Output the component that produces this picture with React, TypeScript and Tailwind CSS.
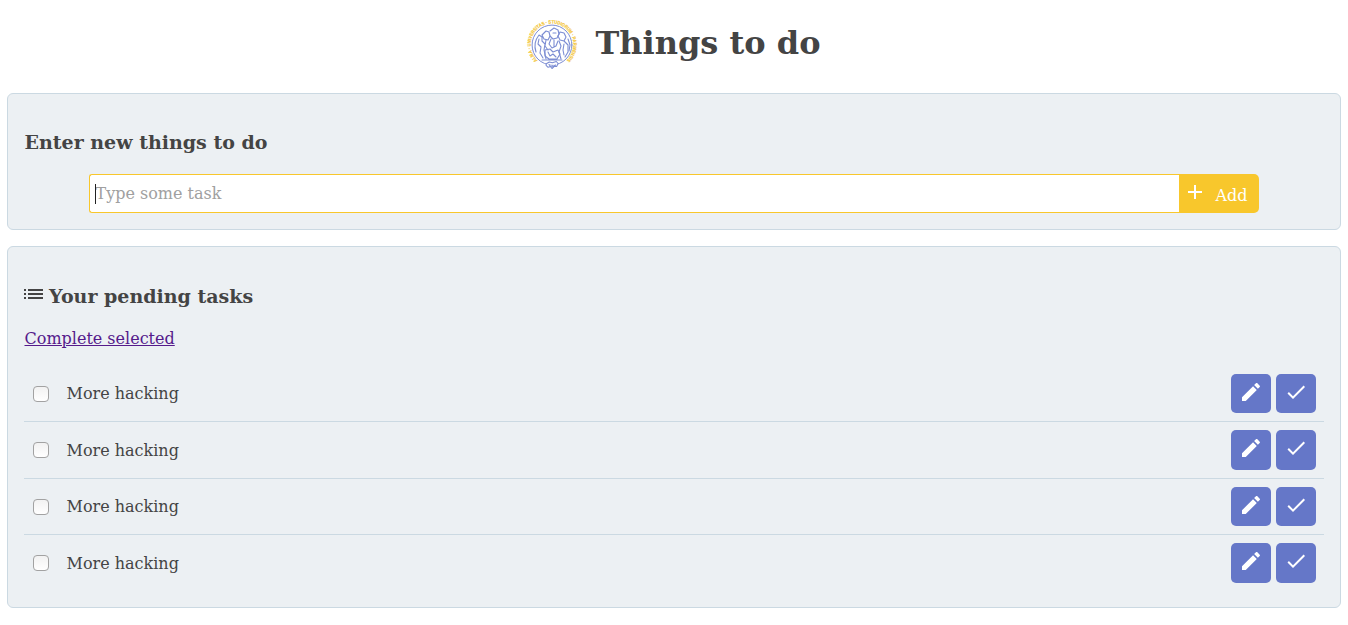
import type { ReactNode } from 'react';

function Seal() {
  return (
    <svg className="h-[52px] w-[52px] shrink-0" viewBox="0 0 52 52" fill="none">
      <defs>
        <path id="ring" d="M11.5 41.4A21.3 21.3 0 1 1 40.5 41.4" />
      </defs>
      <text fontFamily="Liberation Sans" fontSize="4.9" fontWeight="bold" fill="#f4c63a" stroke="#f4c63a" strokeWidth="0.2">
        <textPath href="#ring" textLength="101" lengthAdjust="spacingAndGlyphs">
          ALMA · UNIVERSITAS · STUDIORUM · PARMENSIS
        </textPath>
      </text>
      <g stroke="#7c8dd3" strokeWidth="1.1" strokeLinecap="round" strokeLinejoin="round">
        <circle cx="26" cy="26" r="19.9" strokeWidth="1" />
        <path d="M10 33c-2-6-1-12 3-17l3 2v4l3 3-1 6 2 9M13 20l-1 5 3 3-1 6 3 5M16 16l4-4 3 1 1 4-2 4-4-1zM20 21l-1 6 3 4" />
        <path d="M24 12l4-3 4 2 1 4-2 4-4 1-3-3M27 14h3M25 20l-2 5 3 4 4-2 2-5M28 21v6" />
        <path d="M34 13l4 1 2 4-2 4-4-1-2-4zM33 22l2 5-2 6 2 7M38 22l4 4v7l-3 5M38 25l-1 6 1 5" />
        <path d="M19 31l5-1 3 3 5-2 2 4-3 5h-8l-4-3zM22 33l2 4 3-2 3 3M16 41h20M42 20l2 6-1 6" />
        <path d="M20.3 44.8l3-1.8 3 .8 4-1.3 1.8 2-1.5 3-4.5-.6-4 1.4-2-2zM23 45.5l3 4 3.5-3.5" fill="#fff" />
      </g>
    </svg>
  );
}

function Icon({ d, className = '' }: { d: string; className?: string }) {
  return (
    <svg viewBox="0 0 24 24" className={`h-6 w-6 shrink-0 ${className}`} fill="currentColor" aria-hidden="true">
      <path d={d} />
    </svg>
  );
}

const PLUS = 'M19 13h-6v6h-2v-6H5v-2h6V5h2v6h6v2z';
const LIST = 'M3 13h2v-2H3v2zm0 4h2v-2H3v2zm0-8h2V7H3v2zm4 4h15v-2H7v2zm0 4h15v-2H7v2zM7 7v2h15V7H7z';
const PENCIL =
  'M20.71 7.04c.39-.39.39-1.04 0-1.41l-2.34-2.34c-.37-.39-1.02-.39-1.41 0l-1.84 1.83 3.75 3.75M3 17.25V21h3.75L17.81 9.93l-3.75-3.75L3 17.25z';
const CHECK = 'M21 7L9 19l-5.5-5.5 1.41-1.41L9 16.17 19.59 5.59 21 7z';

function Panel({ className, children }: { className: string; children: ReactNode }) {
  return (
    <section className={`rounded-[6px] border border-[#cbd9e2] bg-[#ecf0f3] px-4 ${className}`}>{children}</section>
  );
}

function ActionButton({ label, d }: { label: string; d: string }) {
  return (
    <button aria-label={label} className="flex h-[39.5px] w-10 justify-center rounded-[5px] bg-[#6577c8] pt-1.5 text-white">
      <Icon d={d} />
    </button>
  );
}

const tasks = ['More hacking', 'More hacking', 'More hacking', 'More hacking'];

export default function App() {
  return (
    <main className="min-h-[625px] bg-white px-[7px] font-['DejaVu_Serif',serif] text-base text-[#444]">
      <header className="flex h-[93px] justify-center gap-[17px] pt-[19px] pr-px">
        <Seal />
        <h1 className="pt-[5px] text-[32px] leading-[38px] font-bold">Things to do</h1>
      </header>

      <Panel className="h-[137px] pt-[37px]">
        <h3 className="pl-[0.5px] text-[19px] leading-[22px] font-bold">Enter new things to do</h3>
        <form className="mx-auto mt-[21px] flex h-[39px] w-[90%]">
          <div className="flex flex-1 items-center rounded-l-[3px] border border-r-0 border-[#f8c72c] bg-white pl-[5px]">
            <span className="h-5 w-px bg-[#222]" />
            <input
              aria-label="Task"
              placeholder="Type some task"
              className="-ml-[0.5px] min-w-0 flex-1 bg-transparent leading-5 outline-none placeholder:text-[#a0a0a0]"
            />
          </div>
          <button type="button" className="flex w-20 rounded-r-[5px] bg-[#f8c72c] pt-1.5 pl-1 text-white">
            <Icon d={PLUS} />
            <span className="pt-1.5 pl-[8.5px] leading-5">Add</span>
          </button>
        </form>
      </Panel>

      <Panel className="mt-4 h-[362px] pt-[35px]">
        <h3 className="flex text-[19px] leading-[22px] font-bold">
          <Icon d={LIST} className="-ml-[3px]" />
          <span className="pt-[3px] pl-1">Your pending tasks</span>
        </h3>
        <a href="#" className="mt-[22px] ml-[0.5px] block w-fit leading-5 text-[#551a8b] underline">
          Complete selected
        </a>
        <ul className="mt-[16.8px]">
          {tasks.map((task, i) => (
            <li
              key={i}
              className="flex h-[56.5px] items-center border-b border-[#cbd9e2] pr-2 pl-[9px] last:border-transparent"
            >
              <input
                type="checkbox"
                aria-label={task}
                className="mt-[0.2px] h-4 w-4 appearance-none rounded-[4px] border border-[#a2a2a2] bg-linear-to-b from-[#f2f2f2] to-white"
              />
              <span className="flex-1 pt-[1.5px] pl-[17.5px] leading-5">{task}</span>
              <div className="flex gap-[5px]">
                <ActionButton label="Edit task" d={PENCIL} />
                <ActionButton label="Complete task" d={CHECK} />
              </div>
            </li>
          ))}
        </ul>
      </Panel>
    </main>
  );
}
